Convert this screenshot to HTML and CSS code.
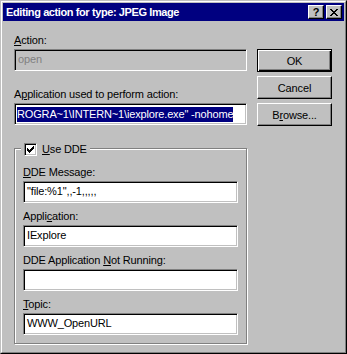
FILE: index.html
```html
<!DOCTYPE html>
<html lang="en">
<head>
    <meta charset="UTF-8">
    <title>Editing action for type: JPEG Image</title>
    <link rel="stylesheet" href="styles.css">
</head>
<body>
    <div class="window">
        <div class="frame">
            <div class="titlebar">
                <span class="title">Editing action for type: JPEG Image</span>
                <div class="title-buttons">
                    <div class="tbtn help">?</div>
                    <div class="tbtn">
                        <svg width="8" height="7" viewBox="0 0 8 7" shape-rendering="crispEdges">
                            <path fill="#000" d="M0 0h2v1h-2z M6 0h2v1h-2z M1 1h2v1h-2z M5 1h2v1h-2z M2 2h4v1h-4z M3 3h2v1h-2z M2 4h4v1h-4z M1 5h2v1h-2z M5 5h2v1h-2z M0 6h2v1h-2z M6 6h2v1h-2z"/>
                        </svg>
                    </div>
                </div>
            </div>

            <div class="client">
                <div class="top">
                    <div class="left">
                        <div class="lbl"><u>A</u>ction:</div>
                        <div class="field disabled">open</div>
                        <div class="lbl gap">A<u>p</u>plication used to perform action:</div>
                        <div class="field scrolled"><span class="sel">ROGRA~1\INTERN~1\iexplore.exe" -nohome</span></div>
                    </div>
                    <div class="buttons">
                        <div class="btn default">OK</div>
                        <div class="btn">Cancel</div>
                        <div class="btn">B<u>r</u>owse...</div>
                    </div>
                </div>

                <div class="group">
                    <div class="legend">
                        <div class="check">
                            <svg width="7" height="7" viewBox="0 0 7 7" shape-rendering="crispEdges">
                                <path fill="#000" d="M6 0h1v1h-1z M5 1h2v1h-2z M0 2h1v1h-1z M4 2h3v1h-3z M0 3h2v1h-2z M3 3h3v1h-3z M0 4h5v1h-5z M1 5h3v1h-3z M2 6h1v1h-1z"/>
                            </svg>
                        </div>
                        <span><u>U</u>se DDE</span>
                    </div>

                    <div class="lbl"><u>D</u>DE Message:</div>
                    <div class="field">"file:%1",,-1,,,,,</div>

                    <div class="lbl gap-sm">Appli<u>c</u>ation:</div>
                    <div class="field">IExplore</div>

                    <div class="lbl gap-sm">DDE Application <u>N</u>ot Running:</div>
                    <div class="field"></div>

                    <div class="lbl gap-sm"><u>T</u>opic:</div>
                    <div class="field">WWW_OpenURL</div>
                </div>
            </div>
        </div>
    </div>
</body>
</html>
```

FILE: styles.css
```css
* {
    margin: 0;
    padding: 0;
    box-sizing: border-box;
}

body {
    width: 347px;
    height: 354px;
    background: #c0c0c0;
    font-family: "Liberation Sans", Arial, sans-serif;
    font-size: 11px;
    letter-spacing: -0.15px;
    color: #000;
    overflow: hidden;
}

u {
    text-decoration: underline;
    text-underline-offset: 1px;
}

/* window frame */
.window {
    width: 347px;
    height: 354px;
    border: 1px solid;
    border-color: #c0c0c0 #000 #000 #c0c0c0;
}

.frame {
    height: 100%;
    border: 1px solid;
    border-color: #fff #808080 #808080 #fff;
    padding: 1px;
    display: flex;
    flex-direction: column;
}

.titlebar {
    height: 18px;
    background: #000080;
    color: #fff;
    display: flex;
    align-items: center;
    justify-content: space-between;
    padding: 0 2px 0 3px;
}

.title {
    font-weight: bold;
    line-height: 18px;
    letter-spacing: -0.4px;
    white-space: nowrap;
}

.title-buttons {
    display: flex;
    gap: 2px;
}

.tbtn {
    width: 16px;
    height: 14px;
    background: #c0c0c0;
    border: 1px solid;
    border-color: #fff #000 #000 #fff;
    box-shadow: inset -1px -1px #808080;
    display: flex;
    align-items: center;
    justify-content: center;
    color: #000;
}

.tbtn.help {
    font-weight: bold;
    font-size: 11px;
    line-height: 12px;
}

/* dialog body */
.client {
    flex: 1;
    padding: 13px 12px 0 11px;
}

.top {
    display: flex;
    gap: 10px;
}

.left {
    width: 233px;
}

.lbl {
    line-height: 13px;
    margin-bottom: 2px;
    white-space: nowrap;
}

.lbl.gap {
    margin-top: 17px;
}

.lbl.gap-sm {
    margin-top: 7px;
}

.field {
    height: 22px;
    background: #fff;
    border: 1px solid;
    border-color: #808080 #fff #fff #808080;
    box-shadow: inset 1px 1px #000, inset -1px -1px #c0c0c0;
    padding: 0 3px;
    line-height: 18px;
    white-space: nowrap;
    overflow: hidden;
}

.field.disabled {
    background: #c0c0c0;
    color: #808080;
}

.field.scrolled {
    padding-left: 2px;
}

.sel {
    background: #000080;
    color: #fff;
    display: inline-block;
    line-height: 15px;
    vertical-align: middle;
}

.buttons {
    width: 75px;
    margin-top: 15px;
    display: flex;
    flex-direction: column;
    gap: 4px;
}

.btn {
    height: 23px;
    background: #c0c0c0;
    border: 1px solid;
    border-color: #fff #000 #000 #fff;
    box-shadow: inset -1px -1px #808080;
    display: flex;
    align-items: center;
    justify-content: center;
}

.btn.default {
    border: 1px solid #000;
    box-shadow: inset 1px 1px #fff, inset -1px -1px #000, inset -2px -2px #808080;
}

/* DDE group */
.group {
    position: relative;
    width: 233px;
    margin-top: 22px;
    border: 1px solid #808080;
    box-shadow: inset 1px 1px #fff, 1px 1px #fff;
    padding: 17px 8px 8px;
}

.legend {
    position: absolute;
    top: -6px;
    left: 6px;
    padding: 0 3px;
    background: #c0c0c0;
    display: flex;
    align-items: center;
    gap: 5px;
    line-height: 13px;
}

.check {
    width: 13px;
    height: 13px;
    background: #fff;
    border: 1px solid;
    border-color: #808080 #fff #fff #808080;
    box-shadow: inset 1px 1px #000, inset -1px -1px #c0c0c0;
    display: flex;
    align-items: center;
    justify-content: center;
}
```
